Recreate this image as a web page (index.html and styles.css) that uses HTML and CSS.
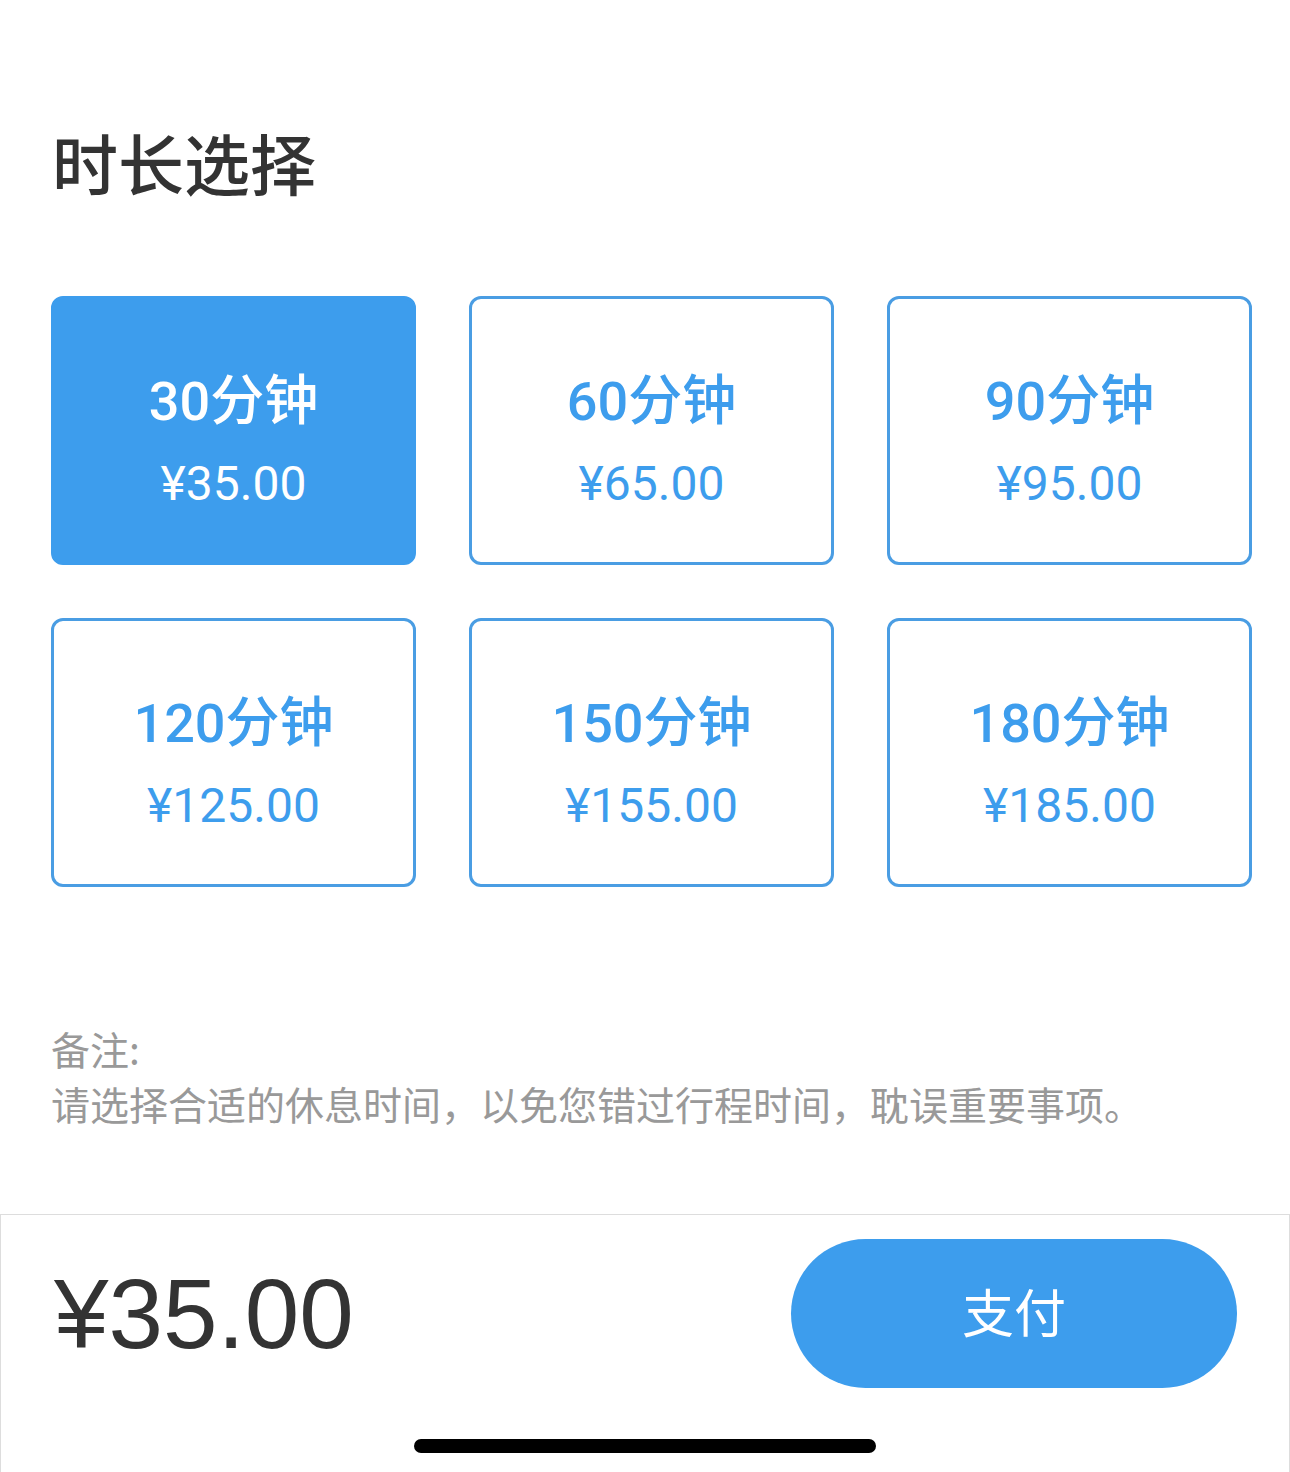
FILE: index.html
```html
<!DOCTYPE html>
<html lang="zh-CN">
<head>
    <meta charset="UTF-8">
    <meta name="viewport" content="width=device-width, initial-scale=1.0">
    <title>时长选择</title>
    <link rel="stylesheet" href="styles.css">
</head>
<body>
    <div class="page">
        <h1 class="title">时长选择</h1>

        <div class="options">
            <div class="option active">
                <div class="option-time">30分钟</div>
                <div class="option-price">¥35.00</div>
            </div>
            <div class="option">
                <div class="option-time">60分钟</div>
                <div class="option-price">¥65.00</div>
            </div>
            <div class="option">
                <div class="option-time">90分钟</div>
                <div class="option-price">¥95.00</div>
            </div>
            <div class="option">
                <div class="option-time">120分钟</div>
                <div class="option-price">¥125.00</div>
            </div>
            <div class="option">
                <div class="option-time">150分钟</div>
                <div class="option-price">¥155.00</div>
            </div>
            <div class="option">
                <div class="option-time">180分钟</div>
                <div class="option-price">¥185.00</div>
            </div>
        </div>

        <div class="notes">
            <p>备注:</p>
            <p>请选择合适的休息时间，以免您错过行程时间，耽误重要事项。</p>
        </div>
    </div>

    <div class="pay-bar">
        <div class="pay-row">
            <div class="total">¥35.00</div>
            <button class="pay-btn">支付</button>
        </div>
        <div class="home-indicator"></div>
    </div>
</body>
</html>
```

FILE: styles.css
```css
body {
    margin: 0;
    padding: 0;
    background-color: #ffffff;
    font-family: 'Noto Sans CJK SC', 'Noto Sans', sans-serif;
    color: #333333;
}

.page {
    padding: 128px 40px 0 51px;
}

.title {
    margin: 0 0 102px 1px;
    font-size: 66px;
    line-height: 66px;
    font-weight: 500;
    color: #333333;
}

.options {
    display: grid;
    grid-template-columns: repeat(3, 365px);
    grid-auto-rows: 269px;
    gap: 53px;
}

.option {
    box-sizing: border-box;
    display: flex;
    flex-direction: column;
    align-items: center;
    padding-top: 76px;
    border: 3px solid #4a9de3;
    border-radius: 12px;
    color: #3d9ded;
    font-family: Roboto, 'Noto Sans CJK SC', sans-serif;
}

.option.active {
    background-color: #3d9ded;
    border-color: #3d9ded;
    color: #ffffff;
}

.option-time {
    font-size: 54px;
    line-height: 54px;
    font-weight: 500;
}

.option-price {
    margin-top: 31px;
    font-size: 48px;
    line-height: 48px;
    font-weight: 400;
}

.notes {
    margin-top: 134px;
    color: #999999;
    font-size: 39px;
    line-height: 55px;
}

.notes p {
    margin: 0;
}

.pay-bar {
    margin-top: 83px;
    padding-bottom: 19px;
    border: 1px solid #dddddd;
    border-bottom: none;
}

.pay-row {
    display: flex;
    align-items: center;
    justify-content: space-between;
    padding: 24px 52px 0 53px;
}

.total {
    font-family: 'Liberation Sans', Arial, sans-serif;
    font-size: 98px;
    line-height: 110px;
    color: #333333;
}

.pay-btn {
    width: 446px;
    height: 149px;
    padding: 0 0 6px;
    border: none;
    border-radius: 75px;
    background-color: #3d9ded;
    color: #ffffff;
    font-family: 'Noto Sans CJK SC', sans-serif;
    font-size: 52px;
    cursor: pointer;
}

.home-indicator {
    width: 462px;
    height: 14px;
    margin: 51px auto 0;
    border-radius: 7px;
    background-color: #000000;
}
```
